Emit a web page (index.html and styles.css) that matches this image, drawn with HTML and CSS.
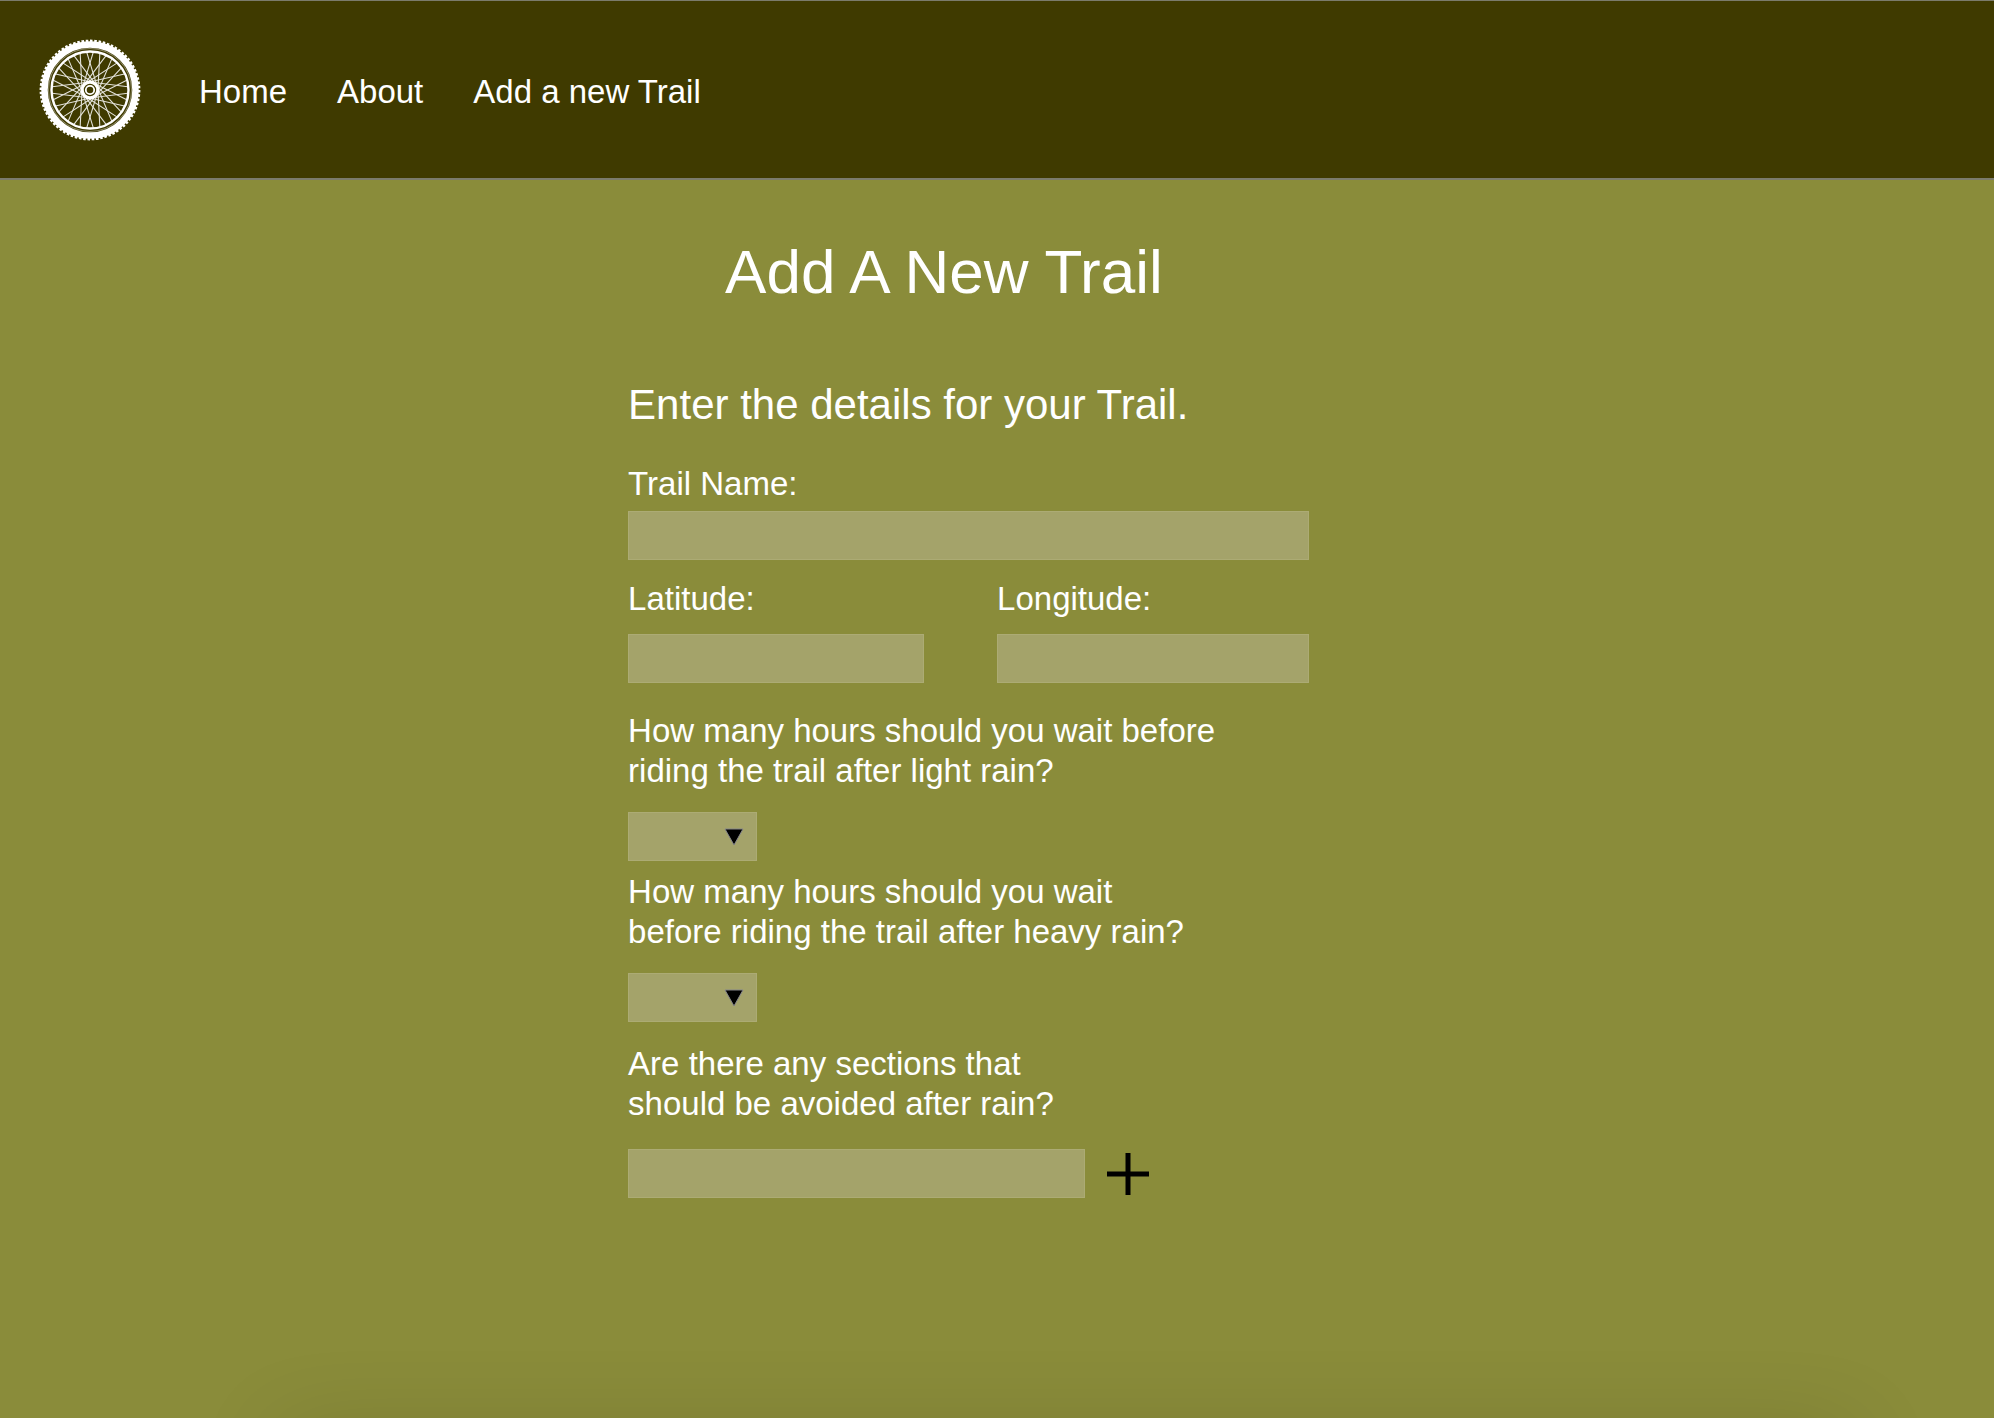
FILE: index.html
```html
<!DOCTYPE html>
<html lang="en">
<head>
<meta charset="utf-8">
<meta name="viewport" content="width=device-width, initial-scale=1">
<title>Add A New Trail</title>
<link rel="stylesheet" href="styles.css">
</head>
<body>
<header class="site-header">
  <a class="logo" href="#" aria-label="Trail home">
    <svg class="logo-wheel" viewBox="-51 -51 102 102" aria-hidden="true">
      <defs>
        <path id="spoke-pair" d="M9.840 -36.700L7.970 -.700M-9.840 -36.700L-7.970 -.700"/>
        <g id="spoke-group">
          <use href="#spoke-pair"/>
          <use href="#spoke-pair" transform="rotate(20)"/>
          <use href="#spoke-pair" transform="rotate(40)"/>
        </g>
      </defs>
      <g fill="none" stroke="#fff">
        <circle r="45.500" stroke-width="6.500"/>
        <circle r="49.200" stroke-width="2.400" pathLength="144" stroke-dasharray="1.200 .8"/>
        <circle r="41.500" stroke-width="1" opacity=".4"/>
        <circle r="38.500" stroke-width="2.400"/>
        <g stroke-width="1.100" opacity=".85">
          <use href="#spoke-group"/>
          <use href="#spoke-group" transform="rotate(60)"/>
          <use href="#spoke-group" transform="rotate(120)"/>
          <use href="#spoke-group" transform="rotate(180)"/>
          <use href="#spoke-group" transform="rotate(240)"/>
          <use href="#spoke-group" transform="rotate(300)"/>
        </g>
        <circle r="7.800" stroke-width="3.200"/>
        <circle r="4.200" stroke-width="1.800"/>
      </g>
    </svg>
  </a>
  <nav class="site-nav" aria-label="Main">
    <a href="#">Home</a>
    <a href="#">About</a>
    <a href="#">Add a new Trail</a>
  </nav>
</header>
<main class="page">
  <h1 class="page-title">Add A New Trail</h1>
  <form class="trail-form">
    <h2 class="form-title">Enter the details for your Trail.</h2>
    <div class="field field-name">
      <label for="trail-name">Trail Name:</label>
      <input id="trail-name" type="text">
    </div>
    <div class="coordinates">
      <div class="field">
        <label for="latitude">Latitude:</label>
        <input id="latitude" type="text">
      </div>
      <div class="field">
        <label for="longitude">Longitude:</label>
        <input id="longitude" type="text">
      </div>
    </div>
    <div class="field field-hours">
      <label for="light-rain">How many hours should you wait before<br>riding the trail after light rain?</label>
      <div class="select-box">
        <select id="light-rain"><option></option></select>
        <svg class="arrow" viewBox="0 0 20 18" aria-hidden="true"><path d="M1 1H19L10 17Z"/></svg>
      </div>
    </div>
    <div class="field field-hours">
      <label for="heavy-rain">How many hours should you wait<br>before riding the trail after heavy rain?</label>
      <div class="select-box">
        <select id="heavy-rain"><option></option></select>
        <svg class="arrow" viewBox="0 0 20 18" aria-hidden="true"><path d="M1 1H19L10 17Z"/></svg>
      </div>
    </div>
    <div class="field field-sections">
      <label for="sections">Are there any sections that<br>should be avoided after rain?</label>
      <div class="section-row">
        <input id="sections" type="text">
        <button class="add-button" type="button" aria-label="Add section">
          <svg viewBox="0 0 42 42" aria-hidden="true"><path d="M21 0V42M0 21H42" stroke="#000" stroke-width="5"/></svg>
        </button>
      </div>
    </div>
  </form>
</main>
</body>
</html>
```
FILE: styles.css
```css
* {
  box-sizing: border-box;
}

body {
  margin: 0;
  min-height: 100vh;
  display: flex;
  flex-direction: column;
  background: #8a8c3a;
  color: #fff;
  font-family: "Liberation Sans", Helvetica, Arial, sans-serif;
  font-size: 33px;
  line-height: 40px;
}

.site-header {
  display: flex;
  align-items: center;
  gap: 58px;
  height: 180px;
  padding: 0 39px;
  background: #3f3a00;
  border-top: 1px solid #7b7b6c;
  border-bottom: 2px solid #7b7b6c;
}

.logo-wheel {
  display: block;
  width: 102px;
  height: 102px;
}

.site-nav {
  display: flex;
  flex-wrap: wrap;
  gap: 50px;
  padding-top: 4px;
}

.site-nav a {
  color: inherit;
  text-decoration: none;
}

.page {
  position: relative;
  flex: 1;
  overflow: hidden;
  padding: 56px 24px 64px 31.5%;
}

.page::after {
  content: "";
  position: absolute;
  left: 14%;
  right: 7%;
  bottom: -60px;
  height: 40px;
  box-shadow: 0 0 90px rgba(0, 0, 0, 0.2);
}

.page-title {
  margin: 0 0 73px 97px;
  font-size: 62px;
  line-height: 72px;
  font-weight: 400;
}

.trail-form {
  max-width: 681px;
}

.form-title {
  margin: 0 0 35px;
  font-size: 42px;
  line-height: 48px;
  font-weight: 400;
}

.field {
  display: flex;
  flex-direction: column;
  gap: 15px;
}

.field-name {
  gap: 7px;
}

.coordinates {
  display: grid;
  grid-template-columns: 296fr 312fr;
  column-gap: 73px;
  margin: 19px 0 28px;
}

.field-hours {
  gap: 21px;
  margin-bottom: 11px;
}

.field-sections {
  gap: 25px;
  margin-top: 22px;
}

input,
select {
  display: block;
  width: 100%;
  height: 49px;
  margin: 0;
  padding: 0 12px;
  border: 1px solid #acab74;
  border-radius: 0;
  background: #a4a36a;
  color: #000;
  font: inherit;
  font-size: 28px;
}

.select-box {
  display: grid;
  width: 129px;
  align-items: center;
}

.select-box select,
.arrow {
  grid-area: 1 / 1;
}

.select-box select {
  appearance: none;
}

.arrow {
  width: 20px;
  height: 18px;
  justify-self: end;
  margin-right: 13px;
  stroke: #85858a;
  stroke-width: 1;
  pointer-events: none;
}

.section-row {
  display: flex;
  align-items: center;
  gap: 22px;
}

.section-row input {
  width: 457px;
}

.add-button {
  padding: 0;
  border: 0;
  background: none;
  cursor: pointer;
}

.add-button svg {
  display: block;
  width: 42px;
  height: 42px;
}
```
